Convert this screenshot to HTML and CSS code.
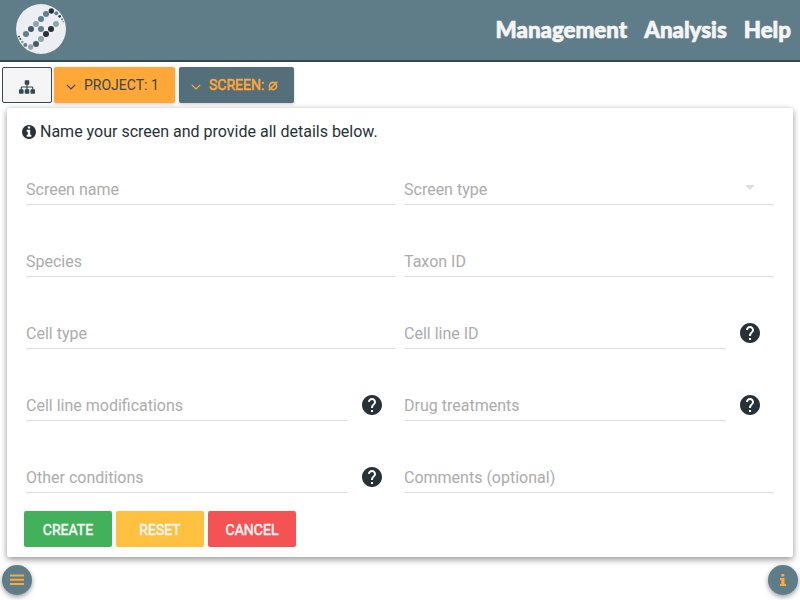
FILE: index.html
```html
<!DOCTYPE html>
<html lang="en">
<head>
<meta charset="utf-8">
<title>Create screen</title>
<link rel="stylesheet" href="styles.css">
</head>
<body>
<svg class="defs" aria-hidden="true">
  <symbol id="help" viewBox="0 0 24 24"><path d="M12 2C6.480 2 2 6.480 2 12s4.480 10 10 10 10-4.480 10-10S17.520 2 12 2zm1 17h-2v-2h2v2zm2.070-7.750l-.9.920C13.450 12.900 13 13.500 13 15h-2v-.5c0-1.100.450-2.100 1.170-2.830l1.240-1.260c.370-.360.590-.860.590-1.410 0-1.100-.9-2-2-2s-2 .9-2 2H8c0-2.210 1.790-4 4-4s4 1.790 4 4c0 .880-.360 1.680-.930 2.250z"/></symbol>
  <symbol id="chevron" viewBox="0 0 10 6"><path d="M.8.8 5 5 9.200.8" fill="none" stroke="currentColor" stroke-width="1.200"/></symbol>
</svg>
<header class="topbar">
  <svg class="logo" viewBox="0 0 150 150">
    <circle cx="75" cy="75" r="75" fill="#eceef3"/>
    <g fill="#607d8b"><circle cx="30" cy="90" r="9"/><circle cx="75" cy="45" r="9"/><circle cx="90" cy="30" r="9"/><circle cx="75" cy="75" r="9"/><circle cx="121" cy="28" r="6"/><circle cx="28" cy="123" r="6"/><circle cx="138" cy="46" r="3"/></g>
    <g fill="#455a64"><circle cx="45" cy="75" r="9"/><circle cx="60" cy="120" r="9"/><circle cx="13" cy="105" r="3"/></g>
    <g fill="#90a4ae"><circle cx="60" cy="60" r="9"/><circle cx="120" cy="60" r="9"/><circle cx="75" cy="105" r="9"/><circle cx="44" cy="129" r="8"/><circle cx="19" cy="114" r="4"/><circle cx="142" cy="53" r="2.500"/></g>
    <g fill="#263238"><circle cx="106" cy="21" r="8"/><circle cx="131" cy="37" r="4"/><circle cx="105" cy="75" r="9"/><circle cx="90" cy="90" r="9"/><circle cx="9" cy="98" r="2.500"/></g>
  </svg>
  <nav class="menu"><a>Management</a><a>Analysis</a><a>Help</a></nav>
</header>
<div class="tabs">
  <button class="tab tab-tree"><svg viewBox="0 0 1792 1792"><path d="M1792 1248v320q0 40-28 68t-68 28h-320q-40 0-68-28t-28-68v-320q0-40 28-68t68-28h96v-192h-512v192h96q40 0 68 28t28 68v320q0 40-28 68t-68 28h-320q-40 0-68-28t-28-68v-320q0-40 28-68t68-28h96v-192h-512v192h96q40 0 68 28t28 68v320q0 40-28 68t-68 28h-320q-40 0-68-28t-28-68v-320q0-40 28-68t68-28h96v-192q0-52 38-90t90-38h512v-192h-96q-40 0-68-28t-28-68v-320q0-40 28-68t68-28h320q40 0 68 28t28 68v320q0 40-28 68t-68 28h-96v192h512q52 0 90 38t38 90v192h96q40 0 68 28t28 68z"/></svg></button>
  <button class="tab tab-project"><svg class="chevron"><use href="#chevron"/></svg>PROJECT: 1</button>
  <button class="tab tab-screen"><svg class="chevron"><use href="#chevron"/></svg>SCREEN: <svg class="empty" viewBox="0 0 10 10"><circle cx="5" cy="5" r="3.600"/><path d="M.8 9.200 9.200.8"/></svg></button>
</div>
<main class="card">
  <p class="intro"><svg viewBox="0 0 1536 1536"><path d="M1024 1248v-160q0-14-9-23t-23-9h-96v-512q0-14-9-23t-23-9h-320q-14 0-23 9t-9 23v160q0 14 9 23t23 9h96v320h-96q-14 0-23 9t-9 23v160q0 14 9 23t23 9h448q14 0 23-9t9-23zm-128-896v-160q0-14-9-23t-23-9h-192q-14 0-23 9t-9 23v160q0 14 9 23t23 9h192q14 0 23-9t9-23zm640 416q0 209-103 385.500t-279.500 279.500-385.500 103-385.500-103-279.500-279.500-103-385.500 103-385.500 279.500-279.500 385.500-103 385.500 103 279.500 279.500 103 385.500z"/></svg>Name your screen and provide all details below.</p>
  <form class="fields">
    <div class="cell"><label class="field">Screen name</label></div>
    <div class="cell"><label class="field select">Screen type<span class="arrow"></span></label></div>
    <div class="cell"><label class="field">Species</label></div>
    <div class="cell"><label class="field">Taxon ID</label></div>
    <div class="cell"><label class="field">Cell type</label></div>
    <div class="cell"><label class="field">Cell line ID</label><svg class="help"><use href="#help"/></svg></div>
    <div class="cell"><label class="field">Cell line modifications</label><svg class="help"><use href="#help"/></svg></div>
    <div class="cell"><label class="field">Drug treatments</label><svg class="help"><use href="#help"/></svg></div>
    <div class="cell"><label class="field">Other conditions</label><svg class="help"><use href="#help"/></svg></div>
    <div class="cell"><label class="field">Comments (optional)</label></div>
  </form>
  <div class="actions">
    <button class="btn create">CREATE</button>
    <button class="btn reset">RESET</button>
    <button class="btn cancel">CANCEL</button>
  </div>
</main>
<footer class="bottom">
  <button class="round"><svg width="14" height="12" viewBox="0 0 14 12"><path d="M0 .5h14v2H0zM0 4.800h14v2H0zM0 9.100h14v2H0z"/></svg></button>
  <button class="round"><svg width="6" height="12" viewBox="0 0 6 12"><path d="M1.300 0h3v2.500h-3zM0 4h4.500v6H6v2H0v-2h1.300V6H0z"/></svg></button>
</footer>
</body>
</html>
```
FILE: styles.css
```css
* { box-sizing: border-box; }
body {
  margin: 0;
  height: 600px;
  overflow: hidden;
  background: #fff;
  color: #263238;
  font-family: Roboto, "Liberation Sans", sans-serif;
}
button { font-family: inherit; border: 0; padding: 0; margin: 0; }
svg { fill: currentColor; flex: none; }
.defs { display: none; }

.topbar {
  display: flex;
  justify-content: space-between;
  align-items: center;
  height: 62px;
  padding: 0 9px 2px 16px;
  background: #5f7d89;
  border-bottom: 2px solid #37474f;
}
.logo { width: 50px; height: 50px; }
.menu {
  display: flex;
  gap: 17px;
  padding-top: 2px;
  color: #f5f5f5;
  font: 900 22.300px/30px Lato, sans-serif;
  -webkit-text-stroke: .7px #f5f5f5;
}

.tabs { display: flex; padding: 5px 2px 0; }
.tab {
  display: flex;
  align-items: center;
  height: 36px;
  border-radius: 2px;
  font-size: 14px;
  line-height: 36px;
  white-space: pre;
  box-shadow: 0 1px 3px rgba(0, 0, 0, .2);
}
.tab-tree {
  width: 50px;
  justify-content: center;
  margin-right: 2px;
  padding-top: 4px;
  background: #f5f5f5;
  border: 1px solid #37474f;
  color: #37474f;
  box-shadow: none;
}
.tab-tree svg { width: 16px; height: 16px; }
.chevron { width: 10px; height: 6px; margin: 3px 8px 0 0; }
.tab-project {
  width: 121px;
  margin-right: 4px;
  padding-left: 12px;
  background: #ffa837;
  color: #37474f;
}
.tab-screen {
  width: 115px;
  padding-left: 12px;
  background: #546e7a;
  color: #ffa837;
  -webkit-text-stroke: .5px #ffa837;
}
.empty { width: 10px; height: 10px; margin-top: 1px; fill: none; stroke: currentColor; stroke-width: 1.600; }

.card {
  height: 449px;
  margin: 5px 7px 0;
  padding: 13px 19px 0;
  background: #fff;
  border-radius: 2px;
  box-shadow: 0 3px 6px rgba(0, 0, 0, .34), 0 0 6px rgba(0, 0, 0, .12);
}
.intro {
  display: flex;
  align-items: center;
  gap: 4px;
  margin: 0 0 0 -4px;
  font-size: 16px;
  line-height: 21px;
}
.intro svg { width: 14px; height: 14px; }
.fields {
  display: grid;
  grid-template-columns: 370px 370px;
  grid-auto-rows: 72px;
  column-gap: 8px;
  margin-top: -9px;
}
.cell { display: flex; align-items: flex-end; }
.field {
  display: flex;
  flex: 1;
  align-items: center;
  height: 32px;
  padding-top: 2px;
  border-bottom: 1px solid #dedede;
  color: #acacac;
  font-size: 16px;
}
.select { justify-content: space-between; }
.arrow {
  margin: -4px 19px 0 0;
  border: 5px solid transparent;
  border-top-color: #dedede;
  border-bottom: 0;
}
.help { width: 24px; height: 24px; margin: 0 12px 4px; color: #263238; }

.actions { display: flex; gap: 4px; margin: 18px 0 0 -2px; }
.btn {
  width: 88px;
  height: 36px;
  padding-top: 2px;
  border-radius: 2px;
  color: #f5f5f5;
  font-size: 14px;
  -webkit-text-stroke: .5px #f5f5f5;
}
.create { background: #43b05c; }
.reset { background: #ffc13f; }
.cancel { background: #f55353; }

.bottom { display: flex; justify-content: space-between; padding: 8px 2px 0; }
.round {
  display: flex;
  align-items: center;
  justify-content: center;
  width: 30px;
  height: 30px;
  border-radius: 50%;
  background: #5f7d89;
  color: #ffa837;
  box-shadow: 0 2px 5px rgba(0, 0, 0, .4);
}
```
